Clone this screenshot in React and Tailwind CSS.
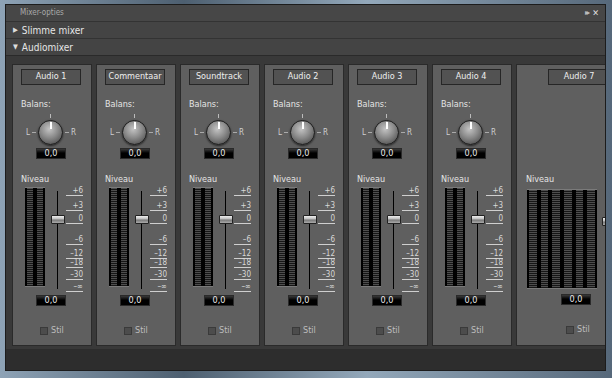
import React from 'react';

const CHANNELS = ['Audio 1', 'Commentaar', 'Soundtrack', 'Audio 2', 'Audio 3', 'Audio 4'];

const SCALE = [
  { label: '+6', top: 0 },
  { label: '+3', top: 15 },
  { label: '0', top: 28 },
  { label: '\u20136', top: 49 },
  { label: '\u201312', top: 63 },
  { label: '\u201318', top: 72 },
  { label: '\u201330', top: 84 },
  { label: '\u2013\u221e', top: 96 },
];

const font = { fontFamily: '"DejaVu Sans Condensed", "Liberation Sans", sans-serif' };

function ValueBox({ className = '' }) {
  return (
    <div
      className={`flex h-[11px] w-[30px] items-center justify-center border border-[#2a2a2a] bg-[linear-gradient(#3a3a3a,#000_45%,#000)] text-[9px] leading-none text-[#e8e8e8] ${className}`}
    >
      0,0
    </div>
  );
}

function Meter({ cols = 2, className = '' }) {
  return (
    <div className={`flex h-[100px] gap-[4px] border-t border-b border-[#7a7a7a] bg-black px-[2px] ${className}`}>
      {Array.from({ length: cols }).map((_, i) => (
        <div
          key={i}
          className="h-full flex-1 bg-[repeating-linear-gradient(#4e4e4e_0px,#4e4e4e_1px,#161616_1px,#161616_2px)]"
        />
      ))}
    </div>
  );
}

function Fader() {
  return (
    <div className="relative h-[100px] w-[14px]">
      <div className="absolute left-[6px] top-[2px] h-[98px] w-[1px] bg-black" />
      <div className="absolute left-0 top-[26px] h-[9px] w-[14px] rounded-[1px] border border-[#222] bg-[linear-gradient(#eee,#bbb_45%,#777_55%,#aaa)]" />
    </div>
  );
}

function Scale() {
  return (
    <div className="relative h-[102px] w-[17px]">
      {SCALE.map((s) => (
        <div
          key={s.label}
          className="absolute left-0 w-[17px] border-b border-[#cfcfcf] text-right text-[8px] leading-[9px] text-[#d8d8d8]"
          style={{ top: s.top }}
        >
          {s.label}
        </div>
      ))}
    </div>
  );
}

function Knob() {
  return (
    <div className="flex items-center gap-[2px]">
      <span className="text-[8px] leading-none text-[#cfcfcf]">L</span>
      <span className="h-[1px] w-[4px] bg-[#aaa]" />
      <div className="relative flex flex-col items-center">
        <span className="absolute -top-[6px] h-[4px] w-[1px] bg-[#bbb]" />
        <div className="relative h-[25px] w-[25px] rounded-full border border-[#1c1c1c] bg-[radial-gradient(circle_at_45%_35%,#c4c4c4,#8a8a8a_45%,#3c3c3c_100%)] shadow-[0_1px_2px_rgba(0,0,0,0.6)]">
          <span className="absolute left-[11px] top-[1px] h-[7px] w-[2px] bg-white" />
        </div>
      </div>
      <span className="h-[1px] w-[4px] bg-[#aaa]" />
      <span className="text-[8px] leading-none text-[#cfcfcf]">R</span>
    </div>
  );
}

function Stil({ className = '' }) {
  return (
    <div className={`flex items-center gap-[3px] ${className}`}>
      <span className="h-[8px] w-[8px] border border-[#3a3a3a] bg-[#4c4c4c]" />
      <span className="text-[9px] leading-none text-[#bdbdbd]">Stil</span>
    </div>
  );
}

function Channel({ name }) {
  return (
    <div className="flex h-[282px] w-[80px] shrink-0 flex-col border border-[#2a2a2a] bg-[#5f5f5f] pl-[8px]">
      <div className="mt-[4px] flex h-[16px] w-[60px] items-center justify-center border border-[#262626] bg-[#525252] text-[9px] text-[#eee]">
        {name}
      </div>
      <div className="mt-[15px] text-[9px] leading-none text-[#e4e4e4]">Balans:</div>
      <div className="mt-[11px] flex justify-center pr-[10px]">
        <Knob />
      </div>
      <div className="mt-[3px] flex pl-[15px]">
        <ValueBox />
      </div>
      <div className="mt-[16px] text-[9px] leading-none text-[#e4e4e4]">Niveau</div>
      <div className="mt-[3px] flex items-start pl-[4px]">
        <Meter className="w-[20px]" />
        <div className="ml-[6px] mt-[2px]">
          <Fader />
        </div>
        <div className="ml-[1px] -mt-[1px]">
          <Scale />
        </div>
      </div>
      <div className="mt-[6px] flex pl-[15px]">
        <ValueBox />
      </div>
      <div className="mt-[20px] flex pl-[19px]">
        <Stil />
      </div>
    </div>
  );
}

function WideChannel() {
  return (
    <div className="flex h-[282px] w-[110px] shrink-0 flex-col border border-[#2a2a2a] bg-[#5f5f5f]">
      <div className="ml-[31px] mt-[4px] flex h-[16px] w-[62px] items-center justify-center border border-[#262626] bg-[#525252] text-[9px] text-[#eee]">
        Audio 7
      </div>
      <div className="ml-[9px] mt-[90px] text-[9px] leading-none text-[#e4e4e4]">Niveau</div>
      <div className="ml-[10px] mt-[5px] flex items-start">
        <Meter cols={6} className="h-[98px] w-[70px]" />
        <div className="ml-[5px] mt-[2px]">
          <Fader />
        </div>
      </div>
      <div className="ml-[44px] mt-[3px] flex">
        <ValueBox />
      </div>
      <div className="ml-[49px] mt-[20px] flex">
        <Stil />
      </div>
    </div>
  );
}

export default function App() {
  return (
    <div
      className="flex h-[378px] w-[612px] flex-col overflow-hidden bg-[linear-gradient(90deg,#8ea3b6,#4d5f70_30%,#93a8ba_60%,#56687a)] pb-[7px] pl-[5px] pr-[6px] pt-[4px]"
      style={font}
    >
      <div className="flex min-h-0 flex-1 flex-col overflow-hidden border border-[#1c1c1c] bg-[#2e2e2e]">
        <div className="flex h-[16px] shrink-0 items-center justify-between bg-[#474747] pl-[14px] pr-[6px]">
          <span className="text-[8px] text-[#a9a9a9]">Mixer-opties</span>
          <div className="flex items-center gap-[4px] text-[8px] leading-none text-[#bbb]">
            <span className="tracking-[-2px]">▸▸</span>
            <span className="text-[9px] font-bold text-[#ddd]">✕</span>
          </div>
        </div>
        <div className="h-[1px] shrink-0 bg-[#333]" />
        <div className="flex h-[16px] shrink-0 items-center gap-[4px] bg-[#444] pl-[7px]">
          <span className="text-[7px] leading-none text-[#ddd]">▶</span>
          <span className="text-[10px] text-[#e6e6e6]">Slimme mixer</span>
        </div>
        <div className="h-[1px] shrink-0 bg-[#333]" />
        <div className="flex h-[16px] shrink-0 items-center gap-[4px] bg-[#444] pl-[7px]">
          <span className="text-[7px] leading-none text-[#ddd]">▼</span>
          <span className="text-[10px] text-[#e6e6e6]">Audiomixer</span>
        </div>
        <div className="h-[1px] shrink-0 bg-[#2a2a2a]" />
        <div className="flex flex-1 flex-col bg-[#2d2d2d]">
          <div className="flex gap-[4px] bg-[#393939] pb-[3px] pl-[6px] pt-[8px]">
            {CHANNELS.map((c) => (
              <Channel key={c} name={c} />
            ))}
            <WideChannel />
          </div>
        </div>
      </div>
    </div>
  );
}
